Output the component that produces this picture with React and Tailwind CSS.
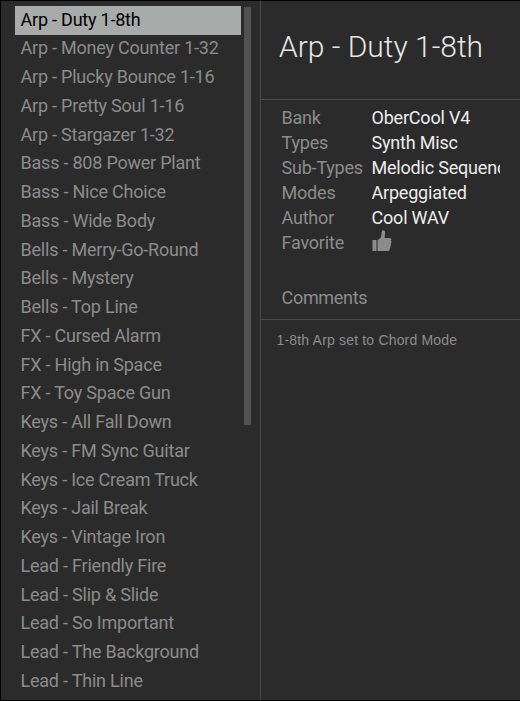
import React from 'react';

const presets = [
    'Arp - Duty 1-8th',
    'Arp - Money Counter 1-32',
    'Arp - Plucky Bounce 1-16',
    'Arp - Pretty Soul 1-16',
    'Arp - Stargazer 1-32',
    'Bass - 808 Power Plant',
    'Bass - Nice Choice',
    'Bass - Wide Body',
    'Bells - Merry-Go-Round',
    'Bells - Mystery',
    'Bells - Top Line',
    'FX - Cursed Alarm',
    'FX - High in Space',
    'FX - Toy Space Gun',
    'Keys - All Fall Down',
    'Keys - FM Sync Guitar',
    'Keys - Ice Cream Truck',
    'Keys - Jail Break',
    'Keys - Vintage Iron',
    'Lead - Friendly Fire',
    'Lead - Slip & Slide',
    'Lead - So Important',
    'Lead - The Background',
    'Lead - Thin Line',
];

const details = [
    { label: 'Bank', value: 'OberCool V4' },
    { label: 'Types', value: 'Synth Misc' },
    { label: 'Sub-Types', value: 'Melodic Sequence' },
    { label: 'Modes', value: 'Arpeggiated' },
    { label: 'Author', value: 'Cool WAV' },
];

const ThumbIcon = () => (
    <svg viewBox="0 0 20 22" className="w-[20px] h-[22px]" fill="#8c8c8c">
        <path d="M0.5 10h4v11h-4z" />
        <path d="M5.5 10.5L9 7.2l.8-5.4C10 .7 10.8.2 11.6.4c1.3.2 1.6 1.4 1.5 2.6L12.6 8h4.9c1.8 0 2.3 1.7 1.5 2.7.8.8.6 2.1-.2 2.7.6.9.4 2-.4 2.6.5.9.1 1.9-.6 2.4.1 1.5-.6 2.6-2.1 2.6H5.5z" />
    </svg>
);

const App = () => {
    const selected = presets[0];

    return (
        <div className="flex w-[520px] h-[701px] overflow-hidden border border-r-0 border-black bg-[#2b2b2b] font-['Roboto',sans-serif] text-[18px] text-[#8c8c8c]">
            <div className="flex w-[259px] shrink-0 pl-[14px] pt-[5px]">
                <ul className="-mt-[0.3px] w-[226px] tracking-[-0.22px]">
                    {presets.map((name) => (
                        <li
                            key={name}
                            className={`pl-[5.5px] leading-[28px] whitespace-nowrap ${name === selected ? 'h-[29.25px] -mb-[0.5px] bg-[#a9abaa] text-black' : 'h-[28.75px]'}`}
                        >
                            {name}
                        </li>
                    ))}
                </ul>
                <div className="ml-[3px] mt-px h-[418px] w-[7px] bg-[#525252]" />
            </div>

            <div className="flex-1 min-w-0 border-l border-[#4a4a4a]">
                <div className="h-[99px] border-b border-[#4a4a4a] pl-[18px] pt-[25px]">
                    <h1 className="text-[30px] leading-[42px] font-light text-[#e6e6e6]">{selected}</h1>
                </div>

                <div className="pl-[20.5px] pr-[20px] pt-[5px]">
                    {details.map(({ label, value }) => (
                        <div key={label} className="flex h-[25px] leading-[25px] tracking-[-0.2px]">
                            <span className="w-[90px] shrink-0">{label}</span>
                            <span className="flex-1 overflow-hidden whitespace-nowrap text-[#ececec]">{value}</span>
                        </div>
                    ))}
                    <div className="flex h-[25px] leading-[25px] tracking-[-0.2px]">
                        <span className="w-[90.5px] shrink-0">Favorite</span>
                        <ThumbIcon />
                    </div>
                </div>

                <div className="mt-[30px] h-[35px] border-b border-[#4a4a4a] pl-[20.5px] leading-[26px] tracking-[-0.3px]">
                    Comments
                </div>
                <p className="pl-[15.5px] pt-[10px] font-['Liberation_Sans',sans-serif] text-[14px] leading-[20px] tracking-[0.18px]">
                    1-8th Arp set to Chord Mode
                </p>
            </div>
        </div>
    );
};

export default App;
